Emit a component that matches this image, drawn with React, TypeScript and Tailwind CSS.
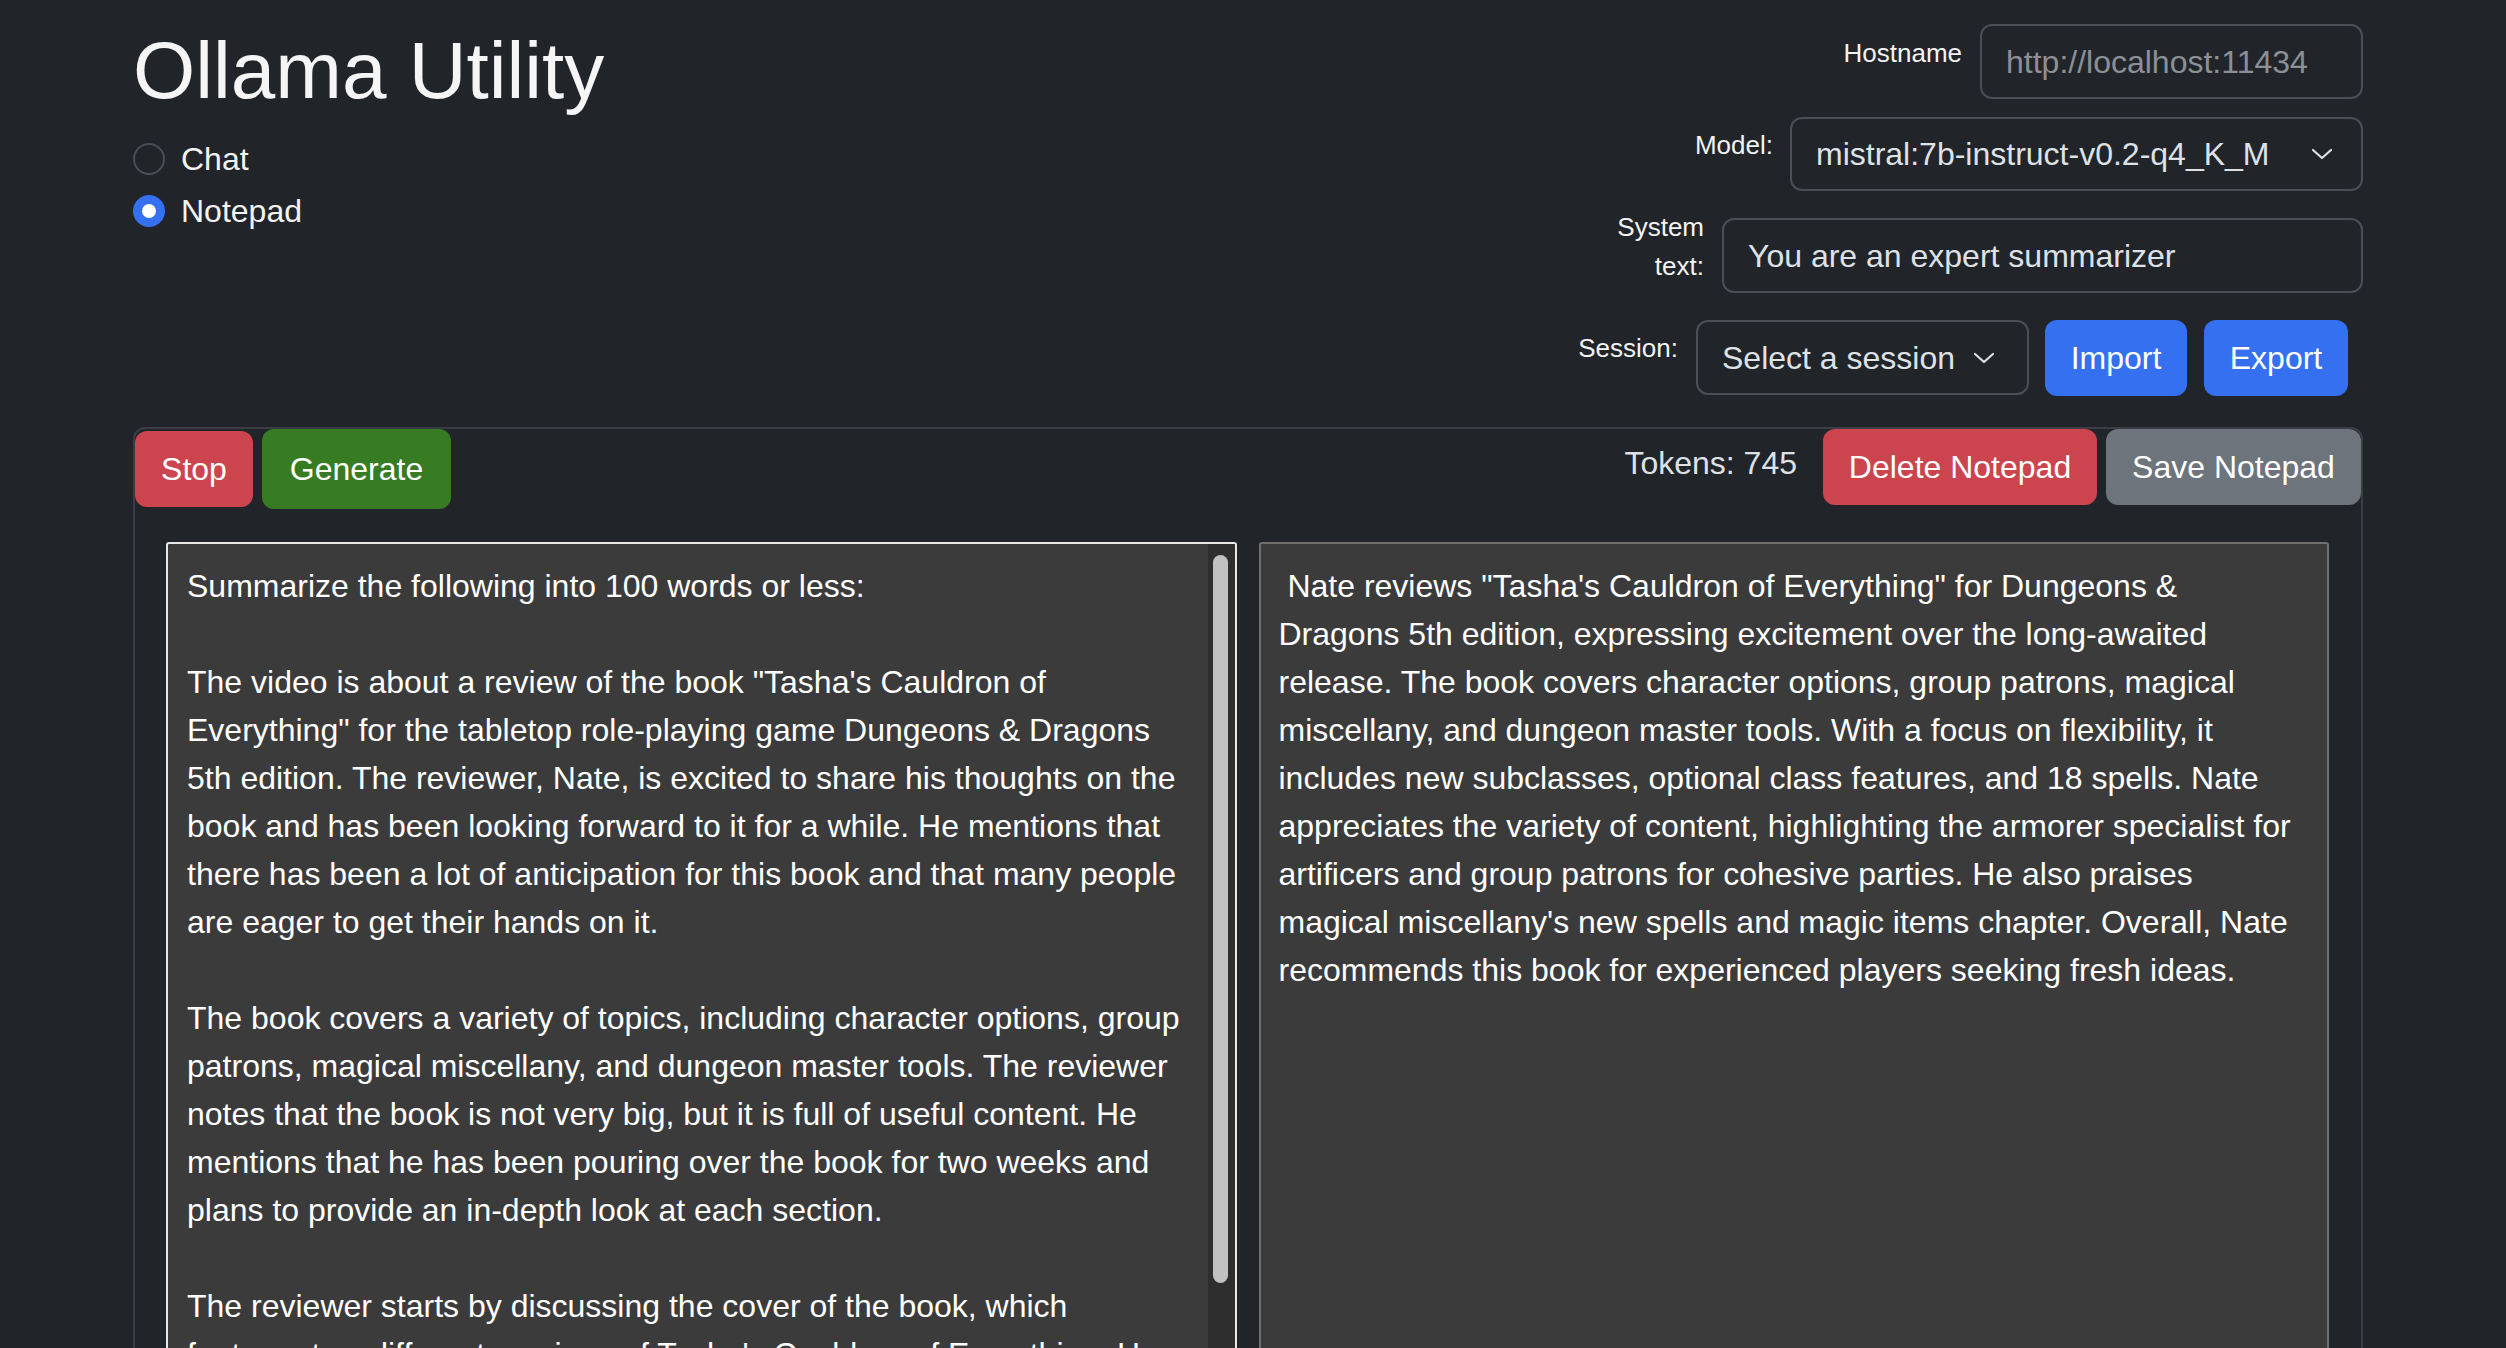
import React from 'react';

const promptText = `Summarize the following into 100 words or less:

The video is about a review of the book "Tasha's Cauldron of
Everything" for the tabletop role-playing game Dungeons & Dragons
5th edition. The reviewer, Nate, is excited to share his thoughts on the
book and has been looking forward to it for a while. He mentions that
there has been a lot of anticipation for this book and that many people
are eager to get their hands on it.

The book covers a variety of topics, including character options, group
patrons, magical miscellany, and dungeon master tools. The reviewer
notes that the book is not very big, but it is full of useful content. He
mentions that he has been pouring over the book for two weeks and
plans to provide an in-depth look at each section.

The reviewer starts by discussing the cover of the book, which
features two different versions of Tasha's Cauldron of Everything. He
notes that the alternate cover is quite striking.`;

const summaryText = ` Nate reviews "Tasha's Cauldron of Everything" for Dungeons &
Dragons 5th edition, expressing excitement over the long-awaited
release. The book covers character options, group patrons, magical
miscellany, and dungeon master tools. With a focus on flexibility, it
includes new subclasses, optional class features, and 18 spells. Nate
appreciates the variety of content, highlighting the armorer specialist for
artificers and group patrons for cohesive parties. He also praises
magical miscellany's new spells and magic items chapter. Overall, Nate
recommends this book for experienced players seeking fresh ideas.`;

function Chevron() {
  return (
    <svg width="22" height="12" viewBox="0 0 22 12" fill="none" className="shrink-0">
      <path d="M2 2 L11 10 L20 2" stroke="#dee2e6" strokeWidth="2.2" strokeLinecap="round" strokeLinejoin="round" />
    </svg>
  );
}

function Radio({ label, checked }: { label: string; checked?: boolean }) {
  return (
    <div className="flex items-start h-[48px] mb-[4px]">
      {checked ? (
        <span className="mt-[8px] w-[32px] h-[32px] rounded-full bg-[#3470ef] flex items-center justify-center">
          <span className="w-[14px] h-[14px] rounded-full bg-white" />
        </span>
      ) : (
        <span className="mt-[8px] w-[32px] h-[32px] rounded-full border-2 border-[#4a4f55] bg-[#212529]" />
      )}
      <span className="ml-[16px] text-[32px] leading-[48px] text-[#f3f3f3]">{label}</span>
    </div>
  );
}

export default function App() {
  return (
    <div className="h-screen overflow-hidden bg-[#212529] font-['Liberation_Sans',Arial,sans-serif] text-[#dee2e6]">
      <div className="ml-[133px] w-[2230px]">
        {/* Header */}
        <div className="flex justify-between">
          <div className="pt-[23px]">
            <h1 className="text-[80px] leading-[96px] font-normal text-[#f5f5f5]">Ollama Utility</h1>
            <div className="mt-[16px]">
              <Radio label="Chat" />
              <Radio label="Notepad" checked />
            </div>
          </div>

          <div className="flex flex-col items-end pt-[24px]">
            <div className="flex items-start">
              <label className="mt-[10px] mr-[18px] text-[26px] leading-[39px] text-[#f3f3f3]">Hostname</label>
              <div className="w-[383px] h-[75px] border-2 border-[#4a4f55] rounded-[12px] pl-[24px] flex items-center text-[32px] text-[#8b9097]">
                http://localhost:11434
              </div>
            </div>

            <div className="flex items-start mt-[18px]">
              <label className="mt-[9px] mr-[17px] text-[26px] leading-[39px] text-[#f3f3f3]">Model:</label>
              <div className="w-[573px] h-[74px] border-2 border-[#4a4f55] rounded-[12px] pl-[24px] pr-[28px] flex items-center justify-between text-[32px] text-[#dee2e6]">
                <span>mistral:7b-instruct-v0.2-q4_K_M</span>
                <Chevron />
              </div>
            </div>

            <div className="flex items-start mt-[27px]">
              <label className="-mt-[10px] mr-[18px] text-[26px] leading-[39px] text-right text-[#f3f3f3]">
                System
                <br />
                text:
              </label>
              <div className="w-[641px] h-[75px] border-2 border-[#4a4f55] rounded-[12px] pl-[24px] flex items-center text-[32px] text-[#dee2e6]">
                You are an expert summarizer
              </div>
            </div>

            <div className="flex items-start mt-[27px] pr-[15px]">
              <label className="mt-[9px] mr-[18px] text-[26px] leading-[39px] text-[#f3f3f3]">Session:</label>
              <div className="w-[333px] h-[75px] border-2 border-[#4a4f55] rounded-[12px] pl-[24px] pr-[32px] flex items-center justify-between text-[32px] text-[#dee2e6]">
                <span>Select a session</span>
                <Chevron />
              </div>
              <button className="ml-[16px] w-[142px] h-[76px] rounded-[12px] bg-[#3470ef] text-white text-[32px]">Import</button>
              <button className="ml-[17px] w-[144px] h-[76px] rounded-[12px] bg-[#3470ef] text-white text-[32px]">Export</button>
            </div>
          </div>
        </div>

        {/* Notepad card */}
        <div className="mt-[31px] h-[1100px] border-2 border-[#3a3e44] rounded-[12px]">
          <div className="flex justify-between items-start">
            <div className="flex items-start">
              <button className="mt-[2px] w-[118px] h-[76px] rounded-[12px] bg-[#cc444e] text-white text-[32px]">Stop</button>
              <button className="ml-[9px] w-[189px] h-[80px] rounded-[12px] bg-[#377c22] text-white text-[32px]">Generate</button>
            </div>
            <div className="flex items-start">
              <span className="mt-[10px] text-[32px] leading-[48px] text-[#dee2e6]">Tokens: 745</span>
              <button className="ml-[26px] w-[274px] h-[76px] rounded-[12px] bg-[#cc444e] text-white text-[32px]">Delete Notepad</button>
              <button className="ml-[9px] w-[255px] h-[76px] rounded-[12px] bg-[#6d747c] text-white text-[32px]">Save Notepad</button>
            </div>
          </div>

          <div className="mt-[33px] pl-[31px] pr-[32px] flex gap-[22px]">
            <div className="relative flex-1 h-[1000px] border-2 border-[#e8e8e8] rounded-[3px] bg-[#3b3b3b] overflow-hidden">
              <div className="pl-[19px] pr-[40px] pt-[18px] text-[32px] leading-[48px] text-white whitespace-pre">{promptText}</div>
              <div className="absolute top-0 right-0 bottom-0 w-[27px] bg-[#2e2e2e]">
                <div className="absolute top-[11px] left-[5px] w-[15px] h-[728px] rounded-full bg-[#c1c1c1]" />
              </div>
            </div>
            <div className="flex-1 h-[1000px] border-2 border-[#707070] rounded-[3px] bg-[#3b3b3b] overflow-hidden">
              <div className="pl-[18px] pr-[18px] pt-[18px] text-[32px] leading-[48px] text-white whitespace-pre">{summaryText}</div>
            </div>
          </div>
        </div>
      </div>
    </div>
  );
}
